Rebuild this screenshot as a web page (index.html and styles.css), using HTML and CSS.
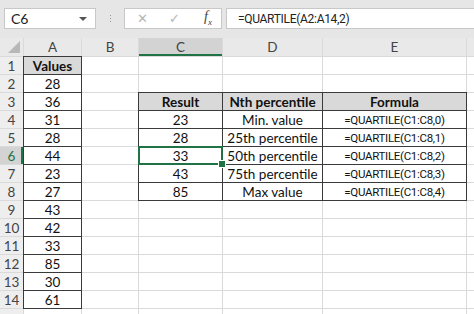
FILE: index.html
```html
<!DOCTYPE html>
<html>
<head>
<meta charset="utf-8">
<link rel="stylesheet" href="styles.css">
</head>
<body>
<div class="app">
  <div class="toolbar">
    <div class="namebox"><span class="nb-text">C6</span><span class="nb-arrow"></span></div>
    <div class="sep"><i></i><i></i><i></i></div>
    <div class="btns">
      <span class="btn x">✕</span>
      <span class="btn ok">✓</span>
      <span class="btn fx">f<sub>x</sub></span>
    </div>
    <div class="formula"><span class="fm">=QUARTILE(A2:A14,2)</span></div>
  </div>
  <div class="sheet">
    <div class="ch corner"><span class="tri"></span></div>
    <div class="ch">A</div><div class="ch">B</div><div class="ch csel">C</div><div class="ch">D</div><div class="ch">E</div><div class="ch last"></div>

    <div class="rh">1</div><div class="c bd hd">Values</div><div class="c"></div><div class="c"></div><div class="c"></div><div class="c"></div><div class="c"></div>
    <div class="rh">2</div><div class="c bd">28</div><div class="c"></div><div class="c"></div><div class="c"></div><div class="c"></div><div class="c"></div>
    <div class="rh">3</div><div class="c bd">36</div><div class="c"></div><div class="c bd hd">Result</div><div class="c bd hd">Nth percentile</div><div class="c bd hd">Formula</div><div class="c"></div>
    <div class="rh">4</div><div class="c bd">31</div><div class="c"></div><div class="c bd">23</div><div class="c bd">Min. value</div><div class="c bd fm">=QUARTILE(C1:C8,0)</div><div class="c"></div>
    <div class="rh">5</div><div class="c bd">28</div><div class="c"></div><div class="c bd">28</div><div class="c bd">25th percentile</div><div class="c bd fm">=QUARTILE(C1:C8,1)</div><div class="c"></div>
    <div class="rh rsel">6</div><div class="c bd">44</div><div class="c"></div><div class="c bd sel">33</div><div class="c bd">50th percentile</div><div class="c bd fm">=QUARTILE(C1:C8,2)</div><div class="c"></div>
    <div class="rh">7</div><div class="c bd">23</div><div class="c"></div><div class="c bd">43</div><div class="c bd">75th percentile</div><div class="c bd fm">=QUARTILE(C1:C8,3)</div><div class="c"></div>
    <div class="rh">8</div><div class="c bd">27</div><div class="c"></div><div class="c bd">85</div><div class="c bd">Max value</div><div class="c bd fm">=QUARTILE(C1:C8,4)</div><div class="c"></div>
    <div class="rh">9</div><div class="c bd">43</div><div class="c"></div><div class="c"></div><div class="c"></div><div class="c"></div><div class="c"></div>
    <div class="rh">10</div><div class="c bd">42</div><div class="c"></div><div class="c"></div><div class="c"></div><div class="c"></div><div class="c"></div>
    <div class="rh">11</div><div class="c bd">33</div><div class="c"></div><div class="c"></div><div class="c"></div><div class="c"></div><div class="c"></div>
    <div class="rh">12</div><div class="c bd">85</div><div class="c"></div><div class="c"></div><div class="c"></div><div class="c"></div><div class="c"></div>
    <div class="rh">13</div><div class="c bd">30</div><div class="c"></div><div class="c"></div><div class="c"></div><div class="c"></div><div class="c"></div>
    <div class="rh">14</div><div class="c bd">61</div><div class="c"></div><div class="c"></div><div class="c"></div><div class="c"></div><div class="c"></div>
    <div class="rh"></div><div class="c"></div><div class="c"></div><div class="c"></div><div class="c"></div><div class="c"></div><div class="c"></div>
  </div>
</div>
</body>
</html>
```
FILE: styles.css
```css
* { box-sizing: border-box; }
html, body { margin: 0; padding: 0; }
body {
  width: 474px;
  height: 314px;
  overflow: hidden;
  background: #ffffff;
  font-family: Lato, "Liberation Sans", sans-serif;
  font-size: 13.5px;
  color: #111;
}
.app { display: flex; flex-direction: column; }
.toolbar {
  height: 38px;
  background: #e6e6e6;
  display: flex;
  align-items: flex-start;
  padding: 8px 0 0 4px;
}
.namebox {
  width: 92px;
  height: 21px;
  background: #fff;
  border: 1px solid #c8c8c8;
  display: flex;
  align-items: center;
  justify-content: space-between;
  padding: 0 8px 0 6px;
  font-size: 14px;
  color: #222;
}
.nb-arrow {
  width: 0; height: 0;
  border-left: 4px solid transparent;
  border-right: 4px solid transparent;
  border-top: 4px solid #555;
}
.sep {
  width: 28px;
  height: 21px;
  display: flex;
  flex-direction: column;
  align-items: center;
  justify-content: center;
  gap: 2px;
}
.sep i { display: block; width: 1px; height: 1px; background: #999; }
.btns {
  width: 98px;
  height: 21px;
  background: #fff;
  border: 1px solid #c8c8c8;
  display: flex;
  align-items: center;
  padding: 0 0 0 12px;
}
.btn { color: #b5b5b5; font-size: 13px; line-height: 1; }
.btn.ok { margin-left: 21px; }
.btn.fx { margin-left: 24px; font-family: "Liberation Serif", serif; font-style: italic; color: #444; font-size: 14px; }
.btn.fx sub { font-size: 9px; }
.formula {
  flex: 1;
  height: 21px;
  margin-left: 4px;
  background: #fff;
  border: 1px solid #c8c8c8;
  border-right: none;
  padding: 0 11px;
  display: flex;
  align-items: center;
  color: #222;
}
.fm {
  font-family: Roboto, "Liberation Sans", sans-serif;
  font-size: 11.5px;
  letter-spacing: -0.3px;
}
.formula .fm { font-size: 12px; }
.sheet {
  display: grid;
  grid-template-columns: 23px 57px 56px 83px 99px 143px 1fr;
  grid-template-rows: 18px repeat(15, 17px);
  gap: 1px;
  background: #dadada;
}
.ch {
  background: #e9e9e9;
  display: flex;
  align-items: center;
  justify-content: center;
  color: #444;
  font-size: 13.5px;
}
.ch.corner { position: relative; }
.tri {
  position: absolute;
  right: 3px; bottom: 3px;
  width: 0; height: 0;
  border-left: 12px solid transparent;
  border-bottom: 12px solid #b8b8b8;
}
.ch.csel {
  background: #d3d3d3;
  box-shadow: inset 0 -2px 0 #217346;
}
.rh {
  background: #eeeeee;
  display: flex;
  align-items: center;
  justify-content: center;
  color: #444;
  font-size: 13.5px;
}
.rh.rsel {
  background: #d3d3d3;
  color: #217346;
  box-shadow: inset -2px 0 0 #217346;
}
.c {
  background: #fff;
  display: flex;
  align-items: center;
  justify-content: center;
  white-space: nowrap;
  overflow: visible;
}
.c.bd { box-shadow: 0 0 0 1px #3a3a3a; }
.c.hd { background: #d9d9d9; font-weight: bold; }
.c.sel { position: relative; }
.c.sel::after {
  content: "";
  position: absolute;
  left: -1px; top: -1px; right: -1px; bottom: -1px;
  border: 2px solid #217346;
}
.c.sel::before {
  content: "";
  position: absolute;
  right: -4px; bottom: -4px;
  width: 6px; height: 6px;
  background: #217346;
  border: 1px solid #fff;
  z-index: 2;
}
```
